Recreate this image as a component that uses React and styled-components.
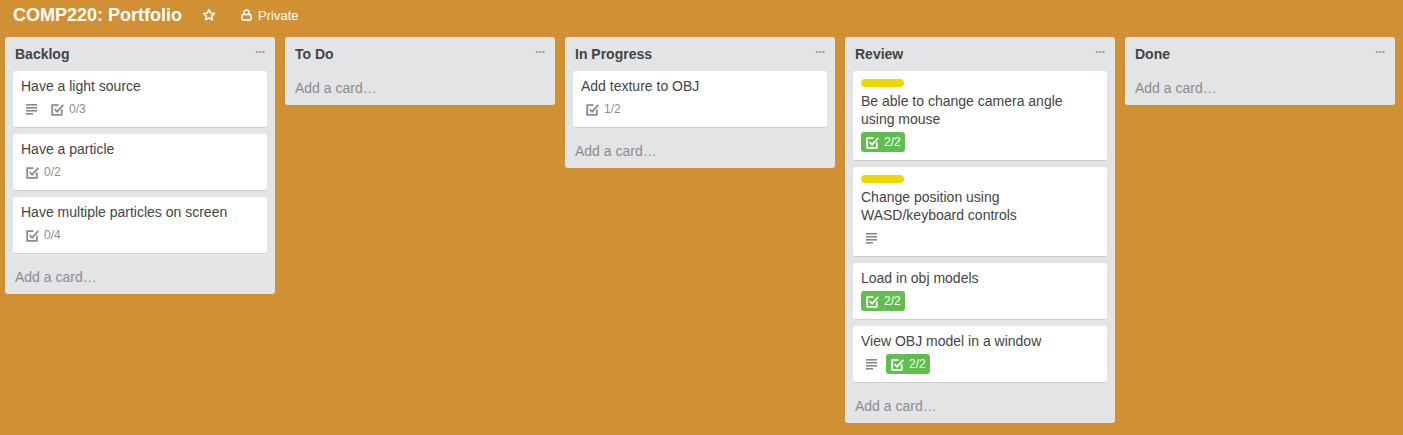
import React from "react";
import styled, { createGlobalStyle } from "styled-components";

const GlobalStyle = createGlobalStyle`
  html, body {
    margin: 0;
    padding: 0;
    background: #d29034;
    font-family: "Liberation Sans", Arial, sans-serif;
  }
`;

const Page = styled.div`
  width: 100%;
  min-height: 435px;
  background: #d29034;
`;

const TopBar = styled.div`
  height: 30px;
  display: flex;
  align-items: center;
  padding: 0 13px;
  color: #fff;
`;

const BoardTitle = styled.h1`
  margin: 0 20px 0 0;
  font-size: 18px;
  font-weight: bold;
  line-height: 30px;
`;

const TopIcon = styled.span`
  display: flex;
  align-items: center;
  margin-right: ${(p) => p.$gap || 0}px;
`;

const Private = styled.span`
  font-size: 13px;
  color: #fff;
`;

const Board = styled.div`
  display: flex;
  align-items: flex-start;
  gap: 10px;
  padding: 7px 5px 0;
`;

const List = styled.div`
  width: 270px;
  flex: none;
  background: #e2e4e6;
  border-radius: 3px;
`;

const ListHeader = styled.div`
  height: 34px;
  display: flex;
  align-items: center;
  justify-content: space-between;
  padding: 0 10px 0 10px;
  box-sizing: border-box;
`;

const ListTitle = styled.h2`
  margin: 0;
  font-size: 14px;
  font-weight: bold;
  color: #444;
`;

const Menu = styled.span`
  color: #999;
  font-size: 13px;
  letter-spacing: -1px;
  font-weight: bold;
  margin-top: -6px;
`;

const Card = styled.div`
  margin: 0 8px 6px;
  background: #fff;
  border-radius: 3px;
  border-bottom: 1px solid #ccc;
  padding: 6px 8px 2px;
`;

const Label = styled.div`
  width: 43px;
  height: 8px;
  margin: 2px 0 5px;
  border-radius: 4px;
  background: #f2d600;
`;

const CardText = styled.div`
  font-size: 14px;
  line-height: 18px;
  color: #444;
  margin-bottom: 4px;
`;

const Badges = styled.div`
  display: flex;
  align-items: center;
  height: 20px;
  margin-bottom: 6px;
`;

const Badge = styled.span`
  display: flex;
  align-items: center;
  height: 20px;
  padding: 0 4px 0 5px;
  margin-right: 4px;
  border-radius: 3px;
  background: ${(p) => (p.$done ? "#61bd4f" : "transparent")};
  color: ${(p) => (p.$done ? "#fff" : "#8c8c8c")};
  font-size: 12px;
  gap: 5px;
`;

const DescIcon = styled.span`
  display: flex;
  align-items: center;
  width: 25px;
  height: 20px;
  padding-left: 5px;
  box-sizing: border-box;
`;

const AddCard = styled.div`
  padding: 8px 10px;
  line-height: 18px;
  font-size: 14px;
  color: #8c8c8c;
`;

const Lines = () => (
  <svg width="12" height="12" viewBox="0 0 12 12">
    <rect x="0" y="1" width="11" height="1.6" fill="#888" />
    <rect x="0" y="4" width="11" height="1.6" fill="#888" />
    <rect x="0" y="7" width="11" height="1.6" fill="#888" />
    <rect x="0" y="10" width="7" height="1.6" fill="#888" />
  </svg>
);

const Check = ({ color }) => (
  <svg width="13" height="13" viewBox="0 0 13 13">
    <path d="M10.8 6.5v5.3H1.2V2.2h6.3" fill="none" stroke={color} strokeWidth="1.8" />
    <path d="M3.6 6.2l2.5 2.5 6.2-6.8" fill="none" stroke={color} strokeWidth="1.8" />
  </svg>
);

const Star = () => (
  <svg width="14" height="14" viewBox="0 0 24 24">
    <path
      d="M12 2.5l2.9 6.2 6.6.7-5 4.5 1.4 6.6L12 17.2l-5.9 3.3 1.4-6.6-5-4.5 6.6-.7z"
      fill="none"
      stroke="#fff"
      strokeWidth="2.6"
      strokeLinejoin="round"
    />
  </svg>
);

const Lock = () => (
  <svg width="11" height="12" viewBox="0 0 11 12">
    <path d="M3 5V3.5a2.5 2.5 0 0 1 5 0V5" fill="none" stroke="#fff" strokeWidth="1.5" />
    <rect x="1" y="5.5" width="9" height="5.5" rx="1" fill="none" stroke="#fff" strokeWidth="1.5" />
  </svg>
);

const lists = [
  {
    title: "Backlog",
    cards: [
      { text: "Have a light source", desc: true, check: "0/3" },
      { text: "Have a particle", check: "0/2" },
      { text: "Have multiple particles on screen", check: "0/4" },
    ],
  },
  { title: "To Do", cards: [] },
  {
    title: "In Progress",
    cards: [{ text: "Add texture to OBJ", check: "1/2" }],
  },
  {
    title: "Review",
    cards: [
      { text: "Be able to change camera angle using mouse", label: true, check: "2/2", done: true },
      { text: "Change position using WASD/keyboard controls", label: true, desc: true },
      { text: "Load in obj models", check: "2/2", done: true },
      { text: "View OBJ model in a window", desc: true, check: "2/2", done: true },
    ],
  },
  { title: "Done", cards: [] },
];

const CardItem = ({ card }) => (
  <Card>
    {card.label && <Label />}
    <CardText>{card.text}</CardText>
    {(card.desc || card.check) && (
      <Badges>
        {card.desc && (
          <DescIcon>
            <Lines />
          </DescIcon>
        )}
        {card.check && (
          <Badge $done={card.done}>
            <Check color={card.done ? "#fff" : "#8c8c8c"} />
            {card.check}
          </Badge>
        )}
      </Badges>
    )}
  </Card>
);

const App = () => (
  <Page>
    <GlobalStyle />
    <TopBar>
      <BoardTitle>COMP220: Portfolio</BoardTitle>
      <TopIcon $gap={25}>
        <Star />
      </TopIcon>
      <TopIcon $gap={6}>
        <Lock />
      </TopIcon>
      <Private>Private</Private>
    </TopBar>
    <Board>
      {lists.map((list) => (
        <List key={list.title}>
          <ListHeader>
            <ListTitle>{list.title}</ListTitle>
            <Menu>···</Menu>
          </ListHeader>
          {list.cards.map((card) => (
            <CardItem key={card.text} card={card} />
          ))}
          <AddCard>Add a card…</AddCard>
        </List>
      ))}
    </Board>
  </Page>
);

export default App;
